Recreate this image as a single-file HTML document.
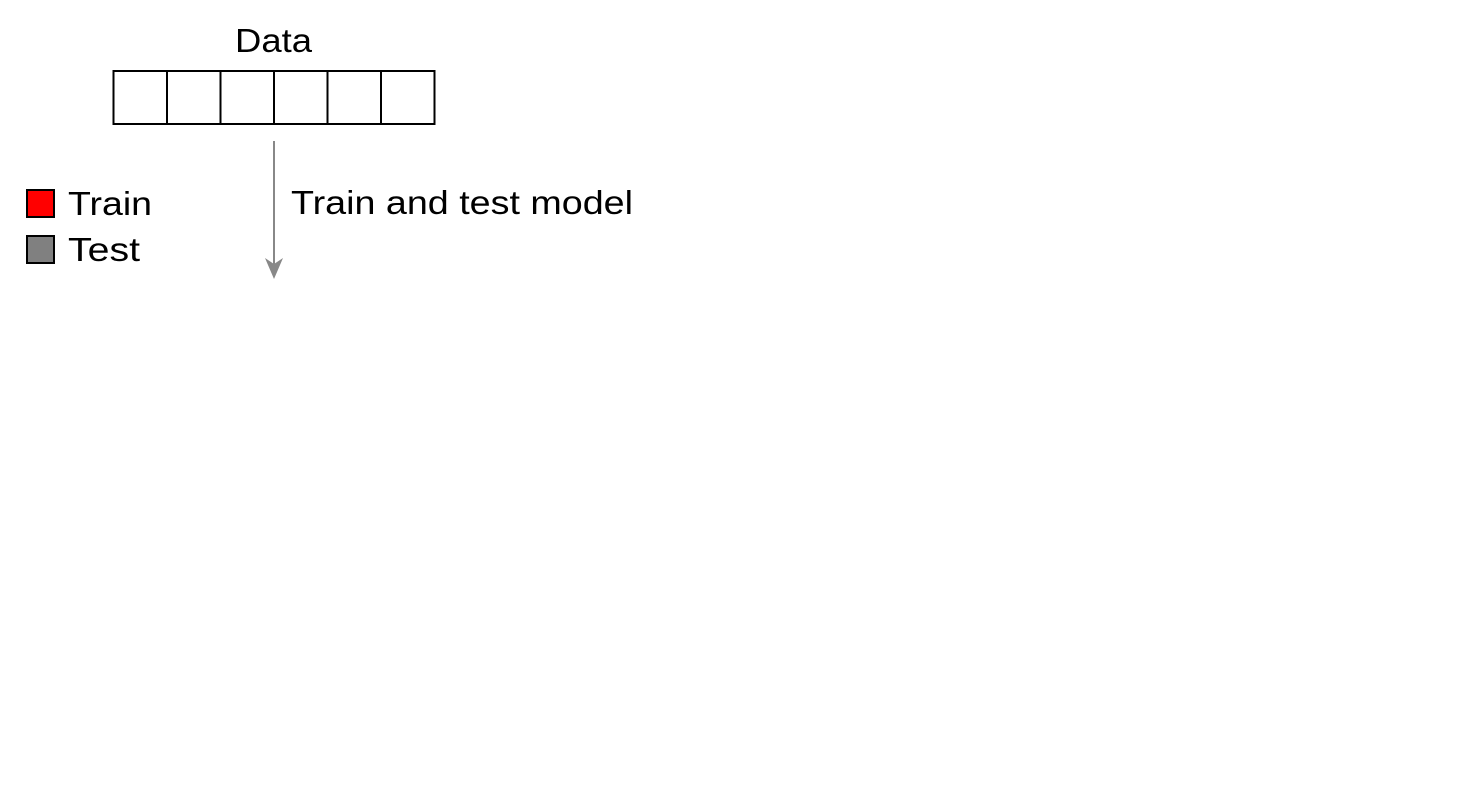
<!DOCTYPE html>
<html><head><meta charset="utf-8"><style>
html,body{margin:0;padding:0;background:#fff;width:1479px;height:812px;overflow:hidden}
svg{position:absolute;left:0;top:0}
</style></head><body>
<svg width="1479" height="812" xmlns="http://www.w3.org/2000/svg" font-family="Liberation Sans, Arial, sans-serif" font-size="33">
<text x="235" y="52" textLength="77" lengthAdjust="spacingAndGlyphs">Data</text>
<g fill="none" stroke="#000" stroke-width="2">
<rect x="113.5" y="71" width="321" height="53"/>
<line x1="167" y1="71" x2="167" y2="124"/>
<line x1="220.5" y1="71" x2="220.5" y2="124"/>
<line x1="274" y1="71" x2="274" y2="124"/>
<line x1="327.5" y1="71" x2="327.5" y2="124"/>
<line x1="381" y1="71" x2="381" y2="124"/>
</g>
<line x1="274" y1="141" x2="274" y2="265" stroke="#888" stroke-width="2"/>
<path d="M265 258 L274 279 L283 258 L274 264 Z" fill="#888"/>
<rect x="27" y="190" width="27" height="27" fill="#f00" stroke="#000" stroke-width="2"/>
<rect x="27" y="236" width="27" height="27" fill="#808080" stroke="#000" stroke-width="2"/>
<text x="68" y="215" textLength="84" lengthAdjust="spacingAndGlyphs">Train</text>
<text x="68" y="261" textLength="72" lengthAdjust="spacingAndGlyphs">Test</text>
<text x="291" y="214" textLength="342" lengthAdjust="spacingAndGlyphs">Train and test model</text>
</svg>
</body></html>
